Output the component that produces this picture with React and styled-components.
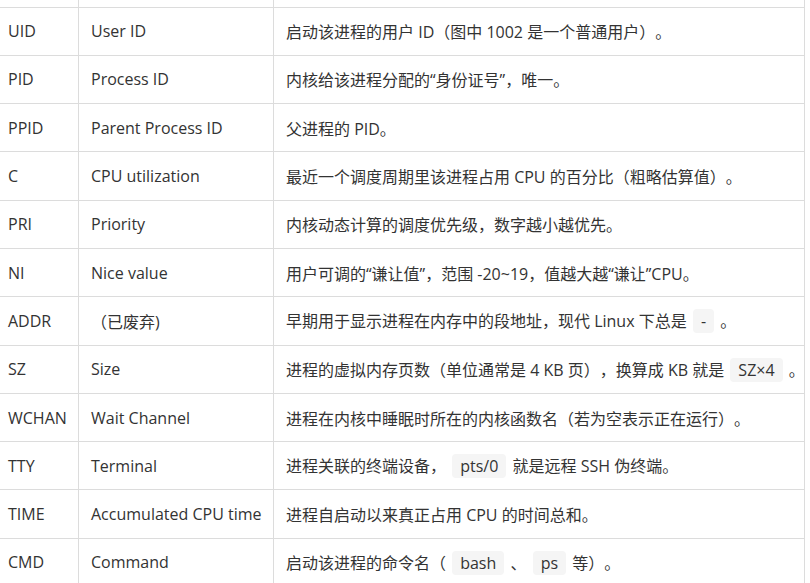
import React from 'react';
import styled, { createGlobalStyle } from 'styled-components';

const GlobalStyle = createGlobalStyle`
  html, body {
    margin: 0;
    padding: 0;
    background: #ffffff;
  }
  body {
    font-family: "Open Sans", "Noto Sans CJK SC", sans-serif;
    color: #333333;
    overflow: hidden;
    text-spacing-trim: space-all;
  }
`;

const rows = [
  ['UID', 'User ID', ['启动该进程的用户 ID（图中 1002 是一个普通用户）。']],
  ['PID', 'Process ID', ['内核给该进程分配的“身份证号”，唯一。']],
  ['PPID', 'Parent Process ID', ['父进程的 PID。']],
  ['C', 'CPU utilization', ['最近一个调度周期里该进程占用 CPU 的百分比（粗略估算值）。']],
  ['PRI', 'Priority', ['内核动态计算的调度优先级，数字越小越优先。']],
  ['NI', 'Nice value', ['用户可调的“谦让值”，范围 -20~19，值越大越“谦让”CPU。']],
  ['ADDR', '（已废弃)', ['早期用于显示进程在内存中的段地址，现代 Linux 下总是 ', { code: '-' }, ' 。']],
  ['SZ', 'Size', ['进程的虚拟内存页数（单位通常是 4 KB 页），换算成 KB 就是 ', { code: 'SZ×4' }, ' 。']],
  ['WCHAN', 'Wait Channel', ['进程在内核中睡眠时所在的内核函数名（若为空表示正在运行）。']],
  ['TTY', 'Terminal', ['进程关联的终端设备， ', { code: 'pts/0' }, ' 就是远程 SSH 伪终端。']],
  ['TIME', 'Accumulated CPU time', ['进程自启动以来真正占用 CPU 的时间总和。']],
  ['CMD', 'Command', ['启动该进程的命令名（ ', { code: 'bash' }, ' 、 ', { code: 'ps' }, ' 等）。']],
];

function App() {
  return (
    <>
      <GlobalStyle />
      <Page>
        <Table>
          <colgroup>
            <col style={{ width: 83 }} />
            <col style={{ width: 195 }} />
            <col style={{ width: 531 }} />
          </colgroup>
          <tbody>
            {/* the row above UID is cut off by the top of the picture */}
            <CapRow>
              <CapCell />
              <CapCell />
              <CapCell />
            </CapRow>
            {rows.map(([field, name, desc]) => (
              <Row key={field}>
                <Cell>{field}</Cell>
                <Cell>{name}</Cell>
                <Cell>
                  {desc.map((part, i) =>
                    typeof part === 'string' ? (
                      <React.Fragment key={i}>{part}</React.Fragment>
                    ) : (
                      <Code key={i}>{part.code}</Code>
                    )
                  )}
                </Cell>
              </Row>
            ))}
          </tbody>
        </Table>
      </Page>
    </>
  );
}

const Page = styled.div`
  width: 810px;
  height: 583px;
  overflow: hidden;
`;

const Table = styled.table`
  margin-left: -5px;
  border-collapse: collapse;
  table-layout: fixed;
  width: 809px;
  font-size: 16px;
`;

const Row = styled.tr`
  height: 48.3px;
`;

const CapRow = styled.tr`
  height: 7px;
`;

const Cell = styled.td`
  border: 1px solid #dcdcdc;
  padding: 0 12px;
  white-space: nowrap;
  overflow: visible;
  vertical-align: middle;
`;

const CapCell = styled(Cell)`
  border-top: none;
  padding: 0;
`;

const Code = styled.code`
  display: inline-block;
  font-family: "Open Sans", "Noto Sans CJK SC", sans-serif;
  font-size: 16px;
  line-height: 24px;
  padding: 0 8px;
  margin: 0 2px;
  background: #f5f5f5;
  border-radius: 4px;
`;

export default App;
